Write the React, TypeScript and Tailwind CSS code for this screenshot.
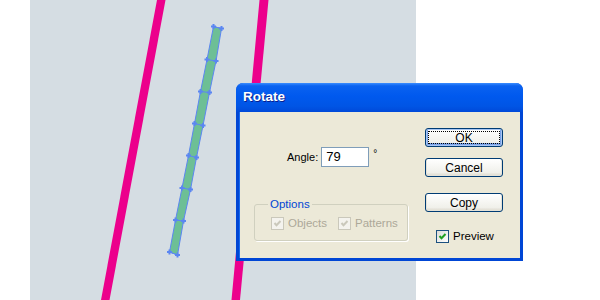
import React from "react"

const leftEdge: [number, number][] = [
  [213.5, 26.5], [207, 59.5], [200.5, 91.5], [194.5, 123.5], [188.5, 155.5], [182, 188], [175.5, 220], [169.5, 252],
]
const rightEdge: [number, number][] = [
  [221.5, 28.5], [216, 61], [209.5, 92.5], [203, 125.5], [196.5, 157.5], [190.5, 189.5], [183.5, 221], [177.5, 255],
]

function Anchor({ x, y }: { x: number; y: number }) {
  return (
    <g fill="#5b86f2">
      <rect x={x - 2.5} y={y - 1} width={5} height={2} />
      <rect x={x - 1} y={y - 2.5} width={2} height={5} />
    </g>
  )
}

function Canvas() {
  const bar = [...leftEdge, ...[...rightEdge].reverse()].map((p) => p.join(",")).join(" ")
  return (
    <div className="w-[386px] h-[300px] bg-[#d5dde3] overflow-hidden">
      <svg width="386" height="300" viewBox="30 0 386 300">
        <polygon points="157,0 165.5,0 109.5,300 101,300" fill="#ec008c" />
        <polygon points="259.5,0 268.5,0 240,300 231.5,300" fill="#ec008c" />
        <polygon points={bar} fill="#6dbf95" stroke="#5b86f2" strokeWidth="1" />
        {leftEdge.map((p, i) => (
          <line key={"l" + i} x1={p[0]} y1={p[1]} x2={rightEdge[i][0]} y2={rightEdge[i][1]} stroke="#5b86f2" strokeWidth="1" />
        ))}
        {leftEdge.map((p, i) => <Anchor key={"a" + i} x={p[0]} y={p[1]} />)}
        {rightEdge.map((p, i) => <Anchor key={"b" + i} x={p[0]} y={p[1]} />)}
      </svg>
    </div>
  )
}

function Check({ disabled }: { disabled?: boolean }) {
  return (
    <span
      className={
        "w-[13px] h-[13px] shrink-0 border flex items-center justify-center " +
        (disabled ? "border-[#cac8bb] bg-[#f4f3ee]" : "border-[#1c5180] bg-[linear-gradient(135deg,#dcdcd7,#ffffff)]")
      }
    >
      <svg width="11" height="11" viewBox="0 0 11 11">
        <path d="M2.5 5 L4.5 7.2 L8.5 3" fill="none" stroke={disabled ? "#cac8bb" : "#21a121"} strokeWidth="2" />
      </svg>
    </span>
  )
}

function XpButton({ label, isDefault }: { label: string; isDefault?: boolean }) {
  return (
    <button
      className={
        "w-[78px] h-[19px] rounded-[3px] border border-[#003c74] bg-[linear-gradient(to_bottom,#ffffff,#f0f0ea_80%,#d6d0c5)] text-[12px] leading-none text-black flex items-center justify-center p-[2px] " +
        (isDefault ? "shadow-[inset_0_0_0_1px_#a8c6f3,inset_0_-1px_0_2px_#7aa2e8]" : "shadow-[inset_0_-1px_0_1px_#e4e2d8]")
      }
    >
      <span
        className={
          "w-full h-full flex items-center justify-center " + (isDefault ? "border border-dotted border-black" : "")
        }
      >
        {label}
      </span>
    </button>
  )
}

function RotateDialog() {
  return (
    <div className="absolute left-[236px] top-[83px] w-[287px] h-[178px] rounded-t-[7px] bg-[#0046d5] flex flex-col font-['Liberation_Sans',Arial,sans-serif]">
      <div className="h-[29px] rounded-t-[7px] bg-[linear-gradient(to_bottom,#3a8dff_0%,#0a62f0_10%,#0059ee_45%,#0055e5_80%,#0049d9_100%)] flex items-center pl-[7px]">
        <span className="text-white font-bold text-[13.5px] [text-shadow:1px_1px_0_#0a1e8c]">Rotate</span>
      </div>
      <div className="flex-1 mx-[3px] mb-[3px] bg-[#ece9d8] flex text-[11.5px] text-black border-l border-[#166aee]">
        <div className="w-[186px] flex flex-col">
          <div className="flex items-center mt-[35px] ml-[47px]">
            <span className="text-[11px]">Angle:</span>
            <div className="ml-[3px] w-[48px] h-[20px] border border-[#7f9db9] bg-white flex items-center pl-[4px] text-[13px]">
              79
            </div>
            <span className="ml-[4px] self-start -mt-[1px] text-[10px]">°</span>
          </div>
          <fieldset className="mt-[31px] ml-[14px] w-[154px] min-w-0 h-[43px] border border-[#d0d0bf] rounded-[3px] shadow-[1px_1px_0_#ffffff] pl-[16px] pr-0">
            <legend className="px-[2px] text-[#0046d5] text-[11.5px] leading-[12px] -ml-[3px]">Options</legend>
            <div className="flex items-center mt-[5px] text-[#aca899] text-[11.5px] whitespace-nowrap">
              <Check disabled />
              <span className="ml-[4px]">Objects</span>
              <span className="ml-[11px]"><Check disabled /></span>
              <span className="ml-[4px]">Patterns</span>
            </div>
          </fieldset>
        </div>
        <div className="flex flex-col ml-[-1px] pt-[16px]">
          <XpButton label="OK" isDefault />
          <div className="mt-[11px]"><XpButton label="Cancel" /></div>
          <div className="mt-[16px]"><XpButton label="Copy" /></div>
          <div className="flex items-center mt-[16px] ml-[11px] text-[11.5px]">
            <Check />
            <span className="ml-[4px]">Preview</span>
          </div>
        </div>
      </div>
    </div>
  )
}

export default function App() {
  return (
    <div className="relative w-[600px] h-[300px] bg-white overflow-hidden">
      <div className="flex h-full pl-[30px]">
        <Canvas />
      </div>
      <RotateDialog />
    </div>
  )
}
